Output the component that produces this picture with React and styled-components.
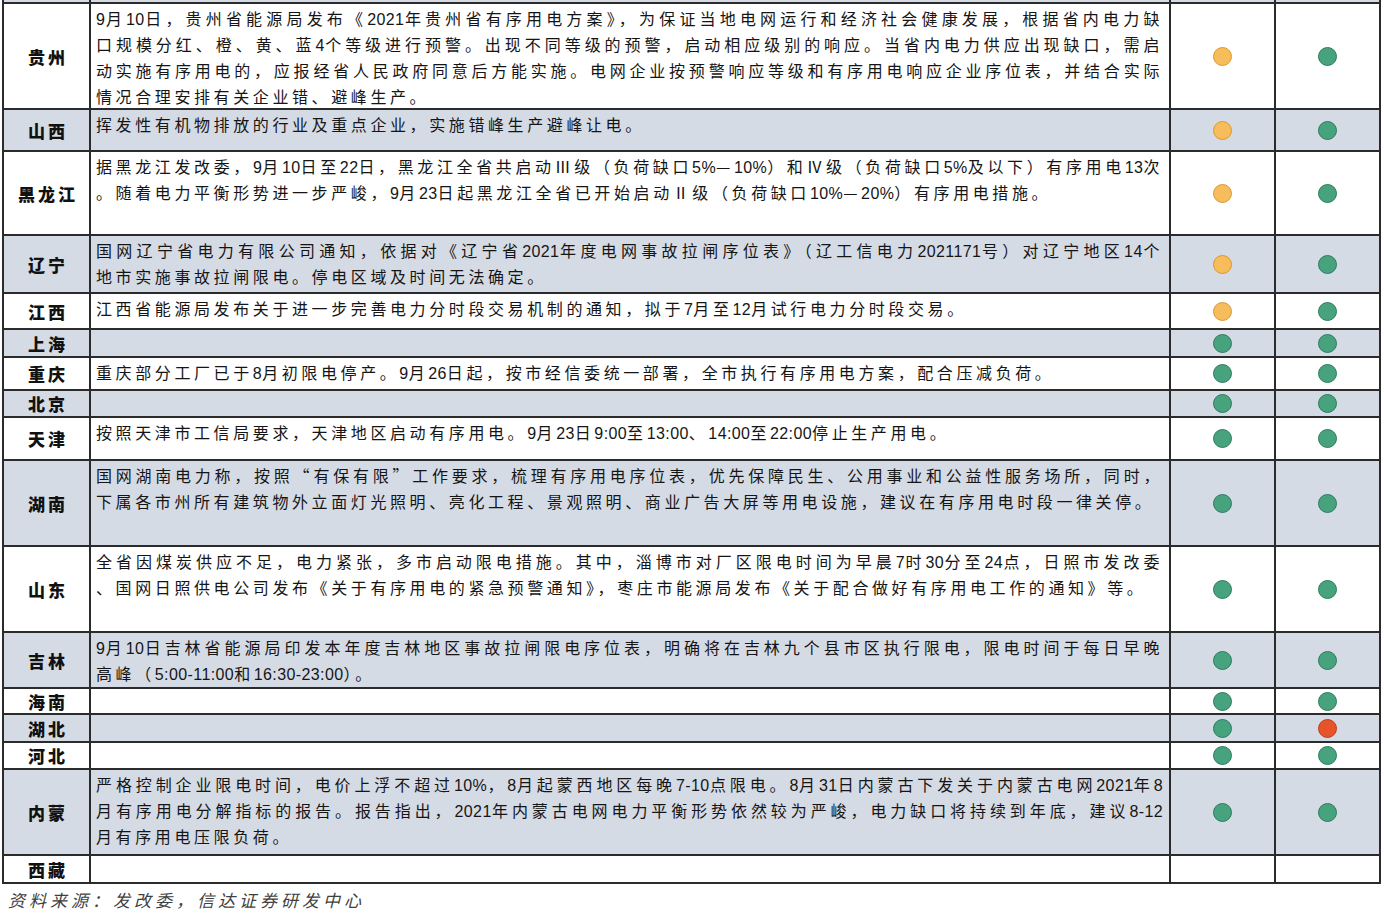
import React from "react";
import styled, { createGlobalStyle } from "styled-components";

const GlobalStyle = createGlobalStyle`
  html, body {
    margin: 0;
    padding: 0;
    background: #ffffff;
  }
  body {
    font-family: "Noto Sans CJK SC", sans-serif;
    color: #151515;
  }
`;

const COLORS = {
  o: { fill: "#f7bc5c", edge: "#d8992f" },
  g: { fill: "#47a27e", edge: "#2d7b5d" },
  r: { fill: "#e7532a", edge: "#c03c17" },
};

const rows = [
  {
    name: "贵州",
    h: 106,
    dots: ["o", "g"],
    lines: [
      "9月10日，贵州省能源局发布《2021年贵州省有序用电方案》，为保证当地电网运行和经济社会健康发展，根据省内电力缺",
      "口规模分红、橙、黄、蓝4个等级进行预警。出现不同等级的预警，启动相应级别的响应。当省内电力供应出现缺口，需启",
      "动实施有序用电的，应报经省人民政府同意后方能实施。电网企业按预警响应等级和有序用电响应企业序位表，并结合实际",
      "情况合理安排有关企业错、避峰生产。",
    ],
  },
  {
    name: "山西",
    h: 42,
    dots: ["o", "g"],
    lines: ["挥发性有机物排放的行业及重点企业，实施错峰生产避峰让电。"],
  },
  {
    name: "黑龙江",
    h: 84,
    dots: ["o", "g"],
    lines: [
      "据黑龙江发改委，9月10日至22日，黑龙江全省共启动Ⅲ级（负荷缺口5%—10%）和Ⅳ级（负荷缺口5%及以下）有序用电13次",
      "。随着电力平衡形势进一步严峻，9月23日起黑龙江全省已开始启动Ⅱ级（负荷缺口10%—20%）有序用电措施。",
    ],
  },
  {
    name: "辽宁",
    h: 58,
    dots: ["o", "g"],
    lines: [
      "国网辽宁省电力有限公司通知，依据对《辽宁省2021年度电网事故拉闸序位表》（辽工信电力2021171号）对辽宁地区14个",
      "地市实施事故拉闸限电。停电区域及时间无法确定。",
    ],
  },
  {
    name: "江西",
    h: 36,
    dots: ["o", "g"],
    lines: ["江西省能源局发布关于进一步完善电力分时段交易机制的通知，拟于7月至12月试行电力分时段交易。"],
  },
  { name: "上海", h: 28, dots: ["g", "g"], lines: [] },
  {
    name: "重庆",
    h: 33,
    dots: ["g", "g"],
    lines: ["重庆部分工厂已于8月初限电停产。9月26日起，按市经信委统一部署，全市执行有序用电方案，配合压减负荷。"],
  },
  { name: "北京", h: 27, dots: ["g", "g"], lines: [] },
  {
    name: "天津",
    h: 43,
    dots: ["g", "g"],
    lines: ["按照天津市工信局要求，天津地区启动有序用电。9月23日9:00至13:00、14:00至22:00停止生产用电。"],
  },
  {
    name: "湖南",
    h: 86,
    dots: ["g", "g"],
    lines: [
      "国网湖南电力称，按照“有保有限”工作要求，梳理有序用电序位表，优先保障民生、公用事业和公益性服务场所，同时，",
      "下属各市州所有建筑物外立面灯光照明、亮化工程、景观照明、商业广告大屏等用电设施，建议在有序用电时段一律关停。",
    ],
  },
  {
    name: "山东",
    h: 86,
    dots: ["g", "g"],
    lines: [
      "全省因煤炭供应不足，电力紧张，多市启动限电措施。其中，淄博市对厂区限电时间为早晨7时30分至24点，日照市发改委",
      "、国网日照供电公司发布《关于有序用电的紧急预警通知》，枣庄市能源局发布《关于配合做好有序用电工作的通知》等。",
    ],
  },
  {
    name: "吉林",
    h: 56,
    dots: ["g", "g"],
    lines: [
      "9月10日吉林省能源局印发本年度吉林地区事故拉闸限电序位表，明确将在吉林九个县市区执行限电，限电时间于每日早晚",
      "高峰（5:00-11:00和16:30-23:00）。",
    ],
  },
  { name: "海南", h: 26, dots: ["g", "g"], lines: [] },
  { name: "湖北", h: 28, dots: ["g", "r"], lines: [] },
  { name: "河北", h: 27, dots: ["g", "g"], lines: [] },
  {
    name: "内蒙",
    h: 86,
    dots: ["g", "g"],
    lines: [
      "严格控制企业限电时间，电价上浮不超过10%，8月起蒙西地区每晚7-10点限电。8月31日内蒙古下发关于内蒙古电网2021年8",
      "月有序用电分解指标的报告。报告指出，2021年内蒙古电网电力平衡形势依然较为严峻，电力缺口将持续到年底，建议8-12",
      "月有序用电压限负荷。",
    ],
  },
  { name: "西藏", h: 28, dots: [], lines: [] },
];

const Page = styled.div`
  padding-left: 2px;
  width: 1382px;
`;

const Table = styled.div`
  border-left: 2px solid #2b2b2b;
  width: 1379px;
  box-sizing: border-box;
`;

const Row = styled.div`
  display: grid;
  grid-template-columns: 87px 1080px 105px 105px;
  height: ${(p) => p.$h}px;
  box-sizing: border-box;
  border-bottom: 2px solid #2b2b2b;
  background: ${(p) => (p.$alt ? "#d5dbe5" : "#ffffff")};
`;

const Cell = styled.div`
  box-sizing: border-box;
  border-right: 2px solid #2b2b2b;
  min-width: 0;
`;

const NameCell = styled(Cell)`
  display: flex;
  align-items: center;
  justify-content: center;
  padding-left: 3px;
  font-weight: 900;
  font-size: 17px;
  letter-spacing: 3px;
  color: #111;
`;

const TextCell = styled(Cell)`
  padding: 1px 6px 0 5px;
  font-size: 16px;
  line-height: 26px;
  letter-spacing: 3.6px;
  overflow: hidden;
`;

const Line = styled.div`
  height: 26px;
  white-space: nowrap;
  text-align: ${(p) => (p.$full ? "justify" : "left")};
  text-align-last: ${(p) => (p.$full ? "justify" : "auto")};
`;

const Latin = styled.span`
  font-family: "Liberation Sans", sans-serif;
  line-height: 16px;
  letter-spacing: 0.4px;
`;

const DotCell = styled(Cell)`
  display: flex;
  align-items: center;
  justify-content: center;
`;

const Dot = styled.span`
  width: 19px;
  height: 19px;
  border-radius: 50%;
  box-sizing: border-box;
  background: ${(p) => COLORS[p.$c].fill};
  border: 1.5px solid ${(p) => COLORS[p.$c].edge};
`;

const Source = styled.div`
  padding: 3px 0 0 6px;
  font-style: italic;
  font-size: 17px;
  line-height: 26px;
  letter-spacing: 4px;
  color: #3f3f3f;
`;

const renderText = (str) =>
  str
    .split(/([0-9A-Za-z:%\-]+)/)
    .filter(Boolean)
    .map((part, i) =>
      /^[0-9A-Za-z:%\-]+$/.test(part) ? <Latin key={i}>{part}</Latin> : part
    );

const App = () => {
  return (
    <Page>
      <GlobalStyle />
      <Table>
        <Row $h={4} $alt>
          <Cell />
          <Cell />
          <Cell />
          <Cell />
        </Row>
        {rows.map((r, i) => (
          <Row key={r.name} $h={r.h} $alt={i % 2 === 1}>
            <NameCell>{r.name}</NameCell>
            <TextCell>
              {r.lines.map((l, j) => (
                <Line key={j} $full={j < r.lines.length - 1}>
                  {renderText(l)}
                </Line>
              ))}
            </TextCell>
            <DotCell>{r.dots[0] && <Dot $c={r.dots[0]} />}</DotCell>
            <DotCell>{r.dots[1] && <Dot $c={r.dots[1]} />}</DotCell>
          </Row>
        ))}
      </Table>
      <Source>资料来源：发改委，信达证券研发中心</Source>
    </Page>
  );
};

export default App;
